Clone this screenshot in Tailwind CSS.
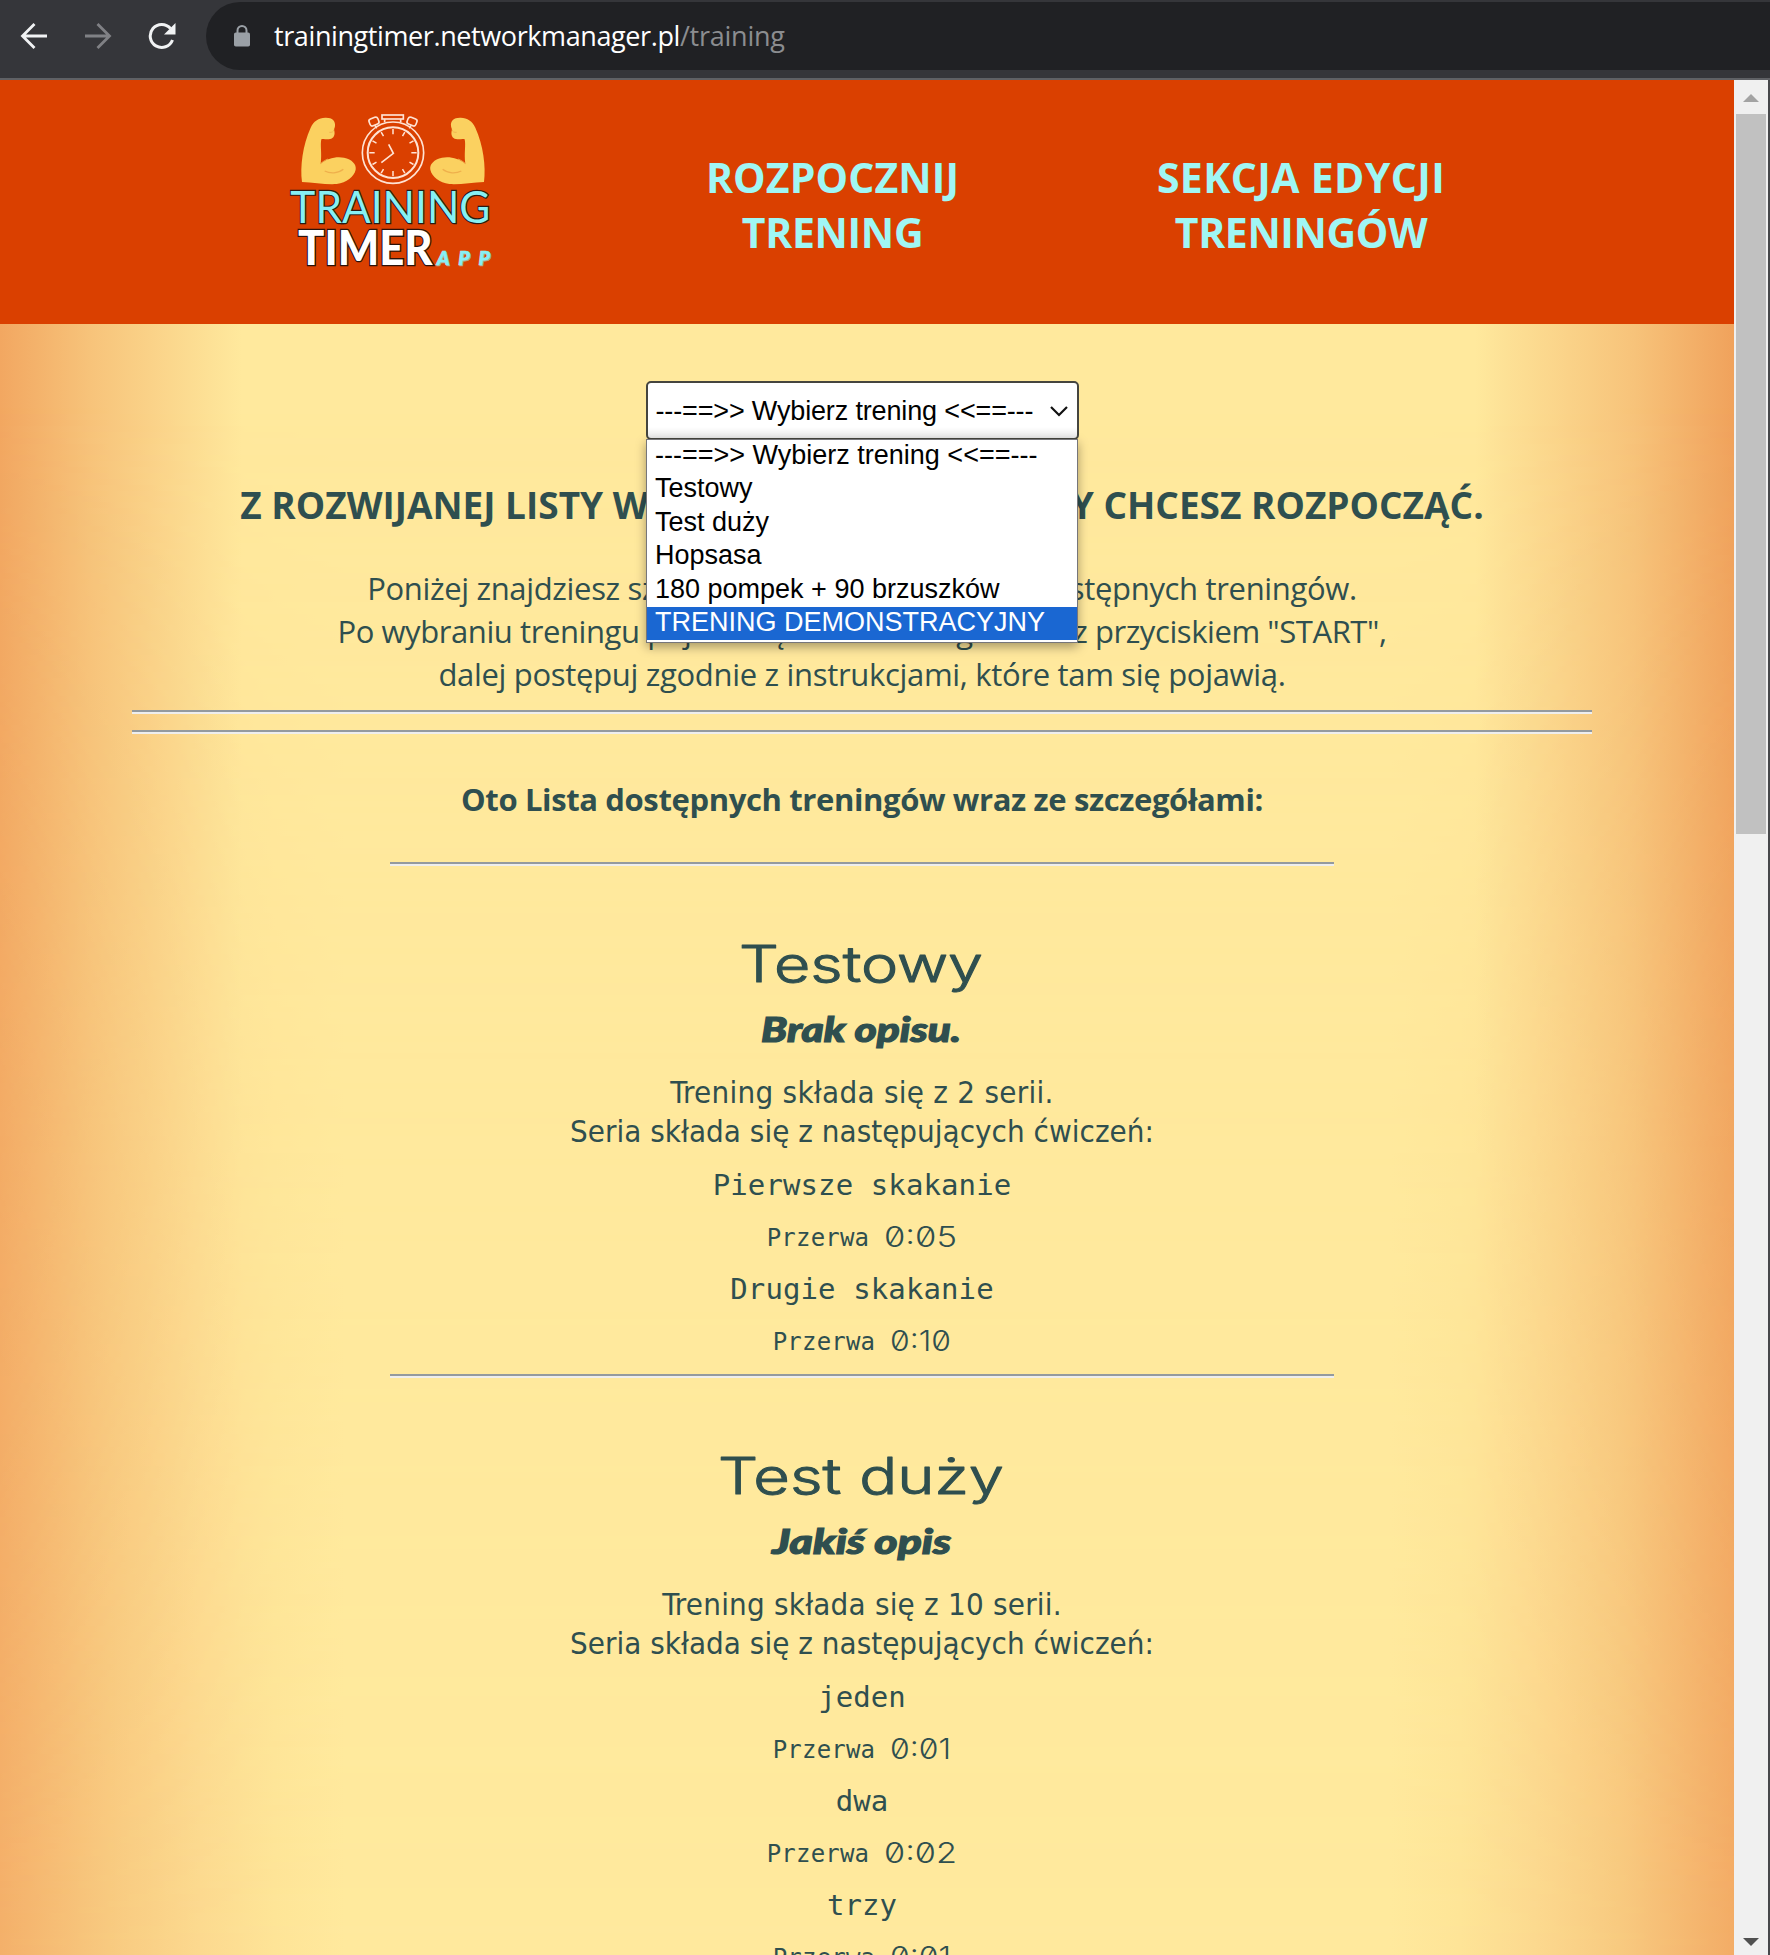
<!DOCTYPE html>
<html lang="pl">
<head>
<meta charset="utf-8">
<title>Training Timer App</title>
<script src="https://cdn.jsdelivr.net/npm/@tailwindcss/browser@4"></script>
</head>
<body class="w-[1770px] h-[1955px] overflow-hidden flex flex-col bg-[#35363a] font-['Open_Sans',sans-serif]">
<!-- Browser toolbar -->
<div class="h-20 shrink-0 flex items-start pt-0.5 border-b-2 border-[#5f6165]">
  <div class="h-[68px] w-[206px] shrink-0 flex items-center">
    <svg class="ml-5 w-7 h-7" viewBox="0 0 28 28" fill="none" stroke="#f1f3f4" stroke-width="2.8"><path d="M27 14H3M14.5 2L2.5 14l12 12"/></svg>
    <svg class="ml-9 w-7 h-7" viewBox="0 0 28 28" fill="none" stroke="#808185" stroke-width="2.8"><path d="M1 14h24M13.500 2l12 12-12 12"/></svg>
    <svg class="ml-9 w-7 h-7" viewBox="0 0 28 28" fill="none" stroke="#f1f3f4" stroke-width="3"><path d="M24.500 18A11.500 11.500 0 1 1 22.500 6.500"/><path d="M27.500 1v11.500H16z" fill="#f1f3f4" stroke="none"/></svg>
  </div>
  <div class="h-[68px] flex-1 rounded-l-[34px] bg-[#202124] flex items-center">
    <svg class="ml-7 w-4 h-[22px]" viewBox="0 0 16 22"><path d="M3.500 9V5.500a4.500 4.500 0 0 1 9 0V9" fill="none" stroke="#9aa0a6" stroke-width="2"/><rect y="7.500" width="16" height="14" rx="1.800" fill="#9aa0a6"/></svg>
    <div class="ml-6 flex text-[27px] leading-9 whitespace-nowrap"><span class="text-white tracking-[-0.4px]">trainingtimer.networkmanager.pl</span><span class="text-[#8b8d90] tracking-[-0.25px]">/training</span></div>
  </div>
</div>
<div class="flex-1 min-h-0 flex">
<div class="w-[1734px] shrink-0 flex flex-col overflow-hidden">
<header class="h-[244px] shrink-0 bg-[#da4000] flex items-start pl-[270px]">
  <svg class="mt-[15px] w-[240px] h-[190px] shrink-0" viewBox="0 0 720 570">
    <defs>
      <g id="arm">
        <path d="M96 261C90 215 98 150 122 98C130 78 146 69 166 68C186 67 197 78 195 92C195 98 192 100 192 105C197 118 191 131 180 132C168 134 161 130 154 133C150 150 156 175 152 206C170 190 200 183 222 188C246 193 260 208 257 224C252 246 230 262 200 267C170 269 130 263 96 261Z" fill="#fbd160"/>
        <path d="M164 228C180 236 204 236 220 223" fill="none" stroke="#efb04c" stroke-width="4"/>
        <path d="M150 207C158 200 166 195 174 192M178 112C186 113 191 110 192 104" fill="none" stroke="#efb04c" stroke-width="2.500"/>
      </g>
    </defs>
    <use href="#arm"/>
    <use href="#arm" transform="matrix(-1 0 0 1 738 0)"/>
    <g fill="none" stroke="#ffe3d3" stroke-width="5">
      <circle cx="369" cy="173" r="92"/><circle cx="369" cy="173" r="76" stroke-width="6"/>
      <rect x="336" y="60" width="64" height="12"/><path d="M344 73v9M392 73v9"/>
      <rect x="298" y="69" width="28" height="22" rx="7" transform="rotate(-22 311 80)"/>
      <rect x="412" y="69" width="28" height="22" rx="7" transform="rotate(22 427 80)"/>
      <path d="M315 91l5 9M423 91l-5 9"/>
      <path d="M356 148L370 175L334 203"/>
      <path d="M369 102v16M369 228v16M298 173h16M424 173h16M333.500 111.500l7 12M404.500 111.500l-7 12M333.500 234.500l7-12M404.500 234.500l-7-12M307.500 137.500l12 7M430.500 137.500l-12 7M307.500 208.500l12-7M430.500 208.500l-12-7" stroke-width="4.500"/>
    </g>
    <g paint-order="stroke" stroke-linejoin="miter">
      <text x="61" y="383" textLength="600" lengthAdjust="spacingAndGlyphs" class="font-['Lato',sans-serif] font-normal text-[134px]" fill="#86f0f4" stroke="#2b1a14" stroke-width="7">TRAINING</text>
      <text x="84" y="509" textLength="404" lengthAdjust="spacingAndGlyphs" class="font-['Lato',sans-serif] font-black text-[142px]" fill="#fff" stroke="#2b120a" stroke-width="8">TIMER</text>
    </g>
    <g class="font-['Lato',sans-serif] font-black italic text-[58px]">
      <text x="503" y="513" textLength="160" fill="#b9a58e" stroke="#b9a58e" stroke-width="2">APP</text>
      <text x="500" y="509" textLength="160" fill="#86f0f4" stroke="#86f0f4" stroke-width="2">APP</text>
    </g>
  </svg>
  <nav class="flex mt-[70px] text-center font-bold text-[41px] leading-[55px] text-[#a0f6f4] whitespace-nowrap">
    <a class="ml-[197px] w-[251px] flex flex-col items-center"><span class="tracking-[0.1px]">ROZPOCZNIJ</span><span class="tracking-[-0.3px]">TRENING</span></a>
    <a class="ml-[199px] w-[288px] flex flex-col items-center"><span class="tracking-[0.35px]">SEKCJA EDYCJI</span><span class="tracking-[-0.4px]">TRENINGÓW</span></a>
  </nav>
</header>
<main class="relative flex-1 min-h-0 pl-[132px] pr-[142px] text-[#2f4f4f] text-center whitespace-nowrap bg-linear-[90deg,#f2a761_0px,#f7c37a_90px,#fde196_210px,#ffe99d_242px,#ffe99d_1475px,#fde196_1505px,#f7c37a_1634px,#f0a25c_1734px]">
  <div class="absolute inset-0 bg-linear-[90deg,#f4b06a_0px,#f8ca80_110px,#fcd98f_200px,#fee497_275px,#ffe99d_345px,#ffe99d_1390px,#fee497_1460px,#fcd98f_1534px,#f8ca80_1619px,#f3ac66_1734px] mask-[linear-gradient(180deg,transparent_5%,#0009_60%,black_100%)]"></div>
  <div class="relative">
    <div class="relative h-[115px] pt-[57px] flex justify-center">
      <div class="w-[433px] h-[59px] border-2 border-[#45453f] rounded-[5px] bg-linear-to-b from-white from-80% to-[#e9e9e9] flex items-center justify-between pl-2 pr-2 font-['Liberation_Sans',sans-serif] text-[27px] text-black">
        <span class="pt-px tracking-[-0.15px]">---==&gt;&gt; Wybierz trening &lt;&lt;==---</span>
        <svg class="w-[20px] h-[12px]" viewBox="0 0 20 12" fill="none" stroke="#111" stroke-width="2.200"><path d="M2 2l8 8 8-8"/></svg>
      </div>
      <ul class="absolute z-10 top-[115px] left-[514px] w-[432px] h-[204px] bg-white border border-[#76767a] shadow-[0_4px_10px_rgba(0,0,0,0.35)] text-left text-black font-['Liberation_Sans',sans-serif] text-[27px] leading-[31.400px]">
        <li class="pl-2 h-[33.400px]">---==&gt;&gt; Wybierz trening &lt;&lt;==---</li>
        <li class="pl-2 h-[33.400px]">Testowy</li>
        <li class="pl-2 h-[33.400px]">Test duży</li>
        <li class="pl-2 h-[33.400px]">Hopsasa</li>
        <li class="pl-2 h-[33.400px]">180 pompek + 90 brzuszków</li>
        <li class="pl-2 h-[33.400px] bg-[#1a67d2] text-white">TRENING DEMONSTRACYJNY</li>
      </ul>
    </div>
    <h1 class="mt-[39px] h-[54px] leading-[54px] font-bold text-[37px]">Z ROZWIJANEJ LISTY WYBIERZ TRENING, KTÓRY CHCESZ ROZPOCZĄĆ.</h1>
    <p class="mt-[35px] text-[31px] leading-[43px]"><span class="tracking-[-0.33px]">Poniżej znajdziesz szczegółowy opis wszystkich dostępnych treningów.</span><br><span class="tracking-[-0.42px]">Po wybraniu treningu pojawi się okno treningu wraz z przyciskiem "START",</span><br><span class="tracking-[-0.31px]">dalej postępuj zgodnie z instrukcjami, które tam się pojawią.</span></p>
    <hr class="mt-[14px] h-1 border-0 border-t-2 border-[#949a9e] bg-[#eee]">
    <hr class="mt-4 h-1 border-0 border-t-2 border-[#949a9e] bg-[#eee]">
    <h2 class="mt-[41px] h-12 leading-[48px] font-bold text-[31px] tracking-[-0.37px]">Oto Lista dostępnych treningów wraz ze szczegółami:</h2>
    <hr class="mt-[39px] mx-[258px] h-1 border-0 border-t-2 border-[#949a9e] bg-[#eee]">
    <section class="pt-[60px]">
      <svg class="block mx-auto w-[400px] h-20" viewBox="0 0 400 80" fill="#2f4f4f" stroke="#2f4f4f" stroke-width="1" stroke-linejoin="round"><text x="77" y="56" textLength="244" lengthAdjust="spacingAndGlyphs" class="font-['Inter',sans-serif] font-light text-[50px]">Testowy</text></svg>
      <svg class="block mx-auto mt-1.5 w-[400px] h-10 overflow-visible" viewBox="0 0 400 40" fill="#2f4f4f" stroke="#2f4f4f" stroke-width="1.200"><text x="99" y="30" textLength="200" lengthAdjust="spacingAndGlyphs" class="font-['Lato',sans-serif] font-black italic text-[35px]">Brak opisu.</text></svg>
      <p class="mt-[21px] font-['DejaVu_Sans_Condensed','DejaVu_Sans',sans-serif] text-[31px] leading-[39px]"><span class="tracking-[0.28px]">Trening składa się z 2 serii.</span><br><span class="tracking-[0.03px]">Seria składa się z następujących ćwiczeń:</span></p>
      <div class="mt-2 font-['DejaVu_Sans_Mono',monospace] text-[29px] leading-[52px]">
        <div class="tracking-[0.1px]">Pierwsze skakanie</div>
        <div class="pt-px -mb-px flex justify-center items-baseline text-[24px]"><span class="tracking-[0.2px]">Przerwa</span><svg class="ml-4 w-[72px] h-5 overflow-visible" viewBox="0 0 72 20" fill="#2f4f4f"><text x="-1" y="20.500" textLength="73" lengthAdjust="spacingAndGlyphs" class="font-['Inter',sans-serif] font-light text-[28px] slashed-zero">0:05</text></svg></div>
        <div class="tracking-[0.1px]">Drugie skakanie</div>
        <div class="pt-px -mb-px flex justify-center items-baseline text-[24px]"><span class="tracking-[0.2px]">Przerwa</span><svg class="ml-4 w-[60px] h-5 overflow-visible" viewBox="0 0 60 20" fill="#2f4f4f"><text x="-1" y="20.500" textLength="61" lengthAdjust="spacingAndGlyphs" class="font-['Inter',sans-serif] font-light text-[28px] slashed-zero">0:10</text></svg></div>
      </div>
    </section>
    <hr class="mt-[7px] mx-[258px] h-1 border-0 border-t-2 border-[#949a9e] bg-[#eee]">
    <section class="pt-[60px]">
      <svg class="block mx-auto w-[400px] h-20" viewBox="0 0 400 80" fill="#2f4f4f" stroke="#2f4f4f" stroke-width="1" stroke-linejoin="round"><text x="56" y="56" textLength="286" lengthAdjust="spacingAndGlyphs" class="font-['Inter',sans-serif] font-light text-[50px]">Test duży</text></svg>
      <svg class="block mx-auto mt-1.5 w-[400px] h-10 overflow-visible" viewBox="0 0 400 40" fill="#2f4f4f" stroke="#2f4f4f" stroke-width="1.200"><text x="110" y="30" textLength="179" lengthAdjust="spacingAndGlyphs" class="font-['Lato',sans-serif] font-black italic text-[35px]">Jakiś opis</text></svg>
      <p class="mt-[21px] font-['DejaVu_Sans_Condensed','DejaVu_Sans',sans-serif] text-[31px] leading-[39px]"><span class="tracking-[0.22px]">Trening składa się z 10 serii.</span><br><span class="tracking-[0.03px]">Seria składa się z następujących ćwiczeń:</span></p>
      <div class="mt-2 font-['DejaVu_Sans_Mono',monospace] text-[29px] leading-[52px]">
        <div>jeden</div>
        <div class="pt-px -mb-px flex justify-center items-baseline text-[24px]"><span class="tracking-[0.2px]">Przerwa</span><svg class="ml-4 w-[60px] h-5 overflow-visible" viewBox="0 0 60 20" fill="#2f4f4f"><text x="-1" y="20.500" textLength="61" lengthAdjust="spacingAndGlyphs" class="font-['Inter',sans-serif] font-light text-[28px] slashed-zero">0:01</text></svg></div>
        <div>dwa</div>
        <div class="pt-px -mb-px flex justify-center items-baseline text-[24px]"><span class="tracking-[0.2px]">Przerwa</span><svg class="ml-4 w-[72px] h-5 overflow-visible" viewBox="0 0 72 20" fill="#2f4f4f"><text x="-1" y="20.500" textLength="73" lengthAdjust="spacingAndGlyphs" class="font-['Inter',sans-serif] font-light text-[28px] slashed-zero">0:02</text></svg></div>
        <div>trzy</div>
        <div class="pt-px -mb-px flex justify-center items-baseline text-[24px]"><span class="tracking-[0.2px]">Przerwa</span><svg class="ml-4 w-[60px] h-5 overflow-visible" viewBox="0 0 60 20" fill="#2f4f4f"><text x="-1" y="20.500" textLength="61" lengthAdjust="spacingAndGlyphs" class="font-['Inter',sans-serif] font-light text-[28px] slashed-zero">0:01</text></svg></div>
      </div>
    </section>
  </div>
</main>
</div>
<!-- Scrollbar -->
<div class="w-[34px] shrink-0 bg-[#f0f0f0] flex flex-col items-center">
  <svg class="mt-3.5 w-4 h-2 shrink-0" viewBox="0 0 16 8" fill="#a3a3a3"><path d="M0 8L8 0l8 8z"/></svg>
  <div class="mt-3 w-[30px] h-[720px] shrink-0 bg-[#c1c1c1]"></div>
  <svg class="mt-auto mb-[9px] w-4 h-2 shrink-0" viewBox="0 0 16 8" fill="#505050"><path d="M0 0l8 8 8-8z"/></svg>
</div>
<div class="w-0.5 bg-[#47484b]"></div>
</div>
</body>
</html>
